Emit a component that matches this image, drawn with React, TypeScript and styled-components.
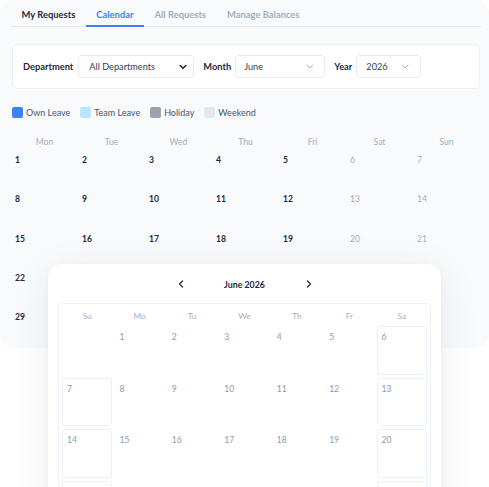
import React from "react";
import styled, { createGlobalStyle } from "styled-components";

const GlobalStyle = createGlobalStyle`
  html, body { margin: 0; padding: 0; background: #ffffff; }
  body { font-family: Lato, "Open Sans", Arial, sans-serif; -webkit-font-smoothing: antialiased; }
  * { box-sizing: border-box; }
`;

const Root = styled.div`
  position: relative;
  width: 489px;
  height: 487px;
  overflow: hidden;
  background: #ffffff;
`;

const Page = styled.div`
  background: #f8fafc;
  border-radius: 14px;
  height: 348px;
  padding: 0 8px 0 11px;
  display: flex;
  flex-direction: column;
`;

const TabBar = styled.div`
  display: flex;
  padding-top: 4px;
  border-bottom: 1px solid #e5e9f0;
`;

const Tab = styled.div<{ $active?: boolean; $muted?: boolean }>`
  height: 23px;
  padding: 0 10.5px;
  display: flex;
  align-items: center;
  font-size: 9.4px;
  font-weight: 700;
  color: ${(p) => (p.$active ? "#3b82f6" : p.$muted ? "#a0aec0" : "#1e293b")};
  border-bottom: 2px solid ${(p) => (p.$active ? "#3b82f6" : "transparent")};
  margin-bottom: -1px;
`;

const FilterCard = styled.div`
  margin-top: 17px;
  margin-right: 1px;
  margin-left: 1px;
  height: 45px;
  background: #ffffff;
  border: 1px solid #edf1f6;
  border-radius: 6px;
  display: flex;
  align-items: center;
  padding: 0 10px;
`;

const Label = styled.span<{ $gap: number }>`
  font-size: 9.3px;
  font-weight: 700;
  color: #1e293b;
  margin-right: ${(p) => p.$gap}px;
`;

const Select = styled.div<{ $w: number; $pl: number; $after: number }>`
  width: ${(p) => p.$w}px;
  height: 23px;
  border: 1px solid #e5e9f0;
  border-radius: 4px;
  background: #ffffff;
  display: flex;
  align-items: center;
  justify-content: space-between;
  padding: 0 ${(p) => p.$after}px 0 ${(p) => p.$pl}px;
  margin-right: 9px;
  font-size: 9.2px;
  color: #334155;
`;

const Legend = styled.div`
  margin-top: 18px;
  display: flex;
  align-items: center;
  gap: 10px;
  margin-left: 1px;
`;

const LegendItem = styled.div`
  display: flex;
  align-items: center;
  gap: 3px;
  font-size: 9px;
  color: #475569;
`;

const Swatch = styled.span<{ $c: string }>`
  width: 11px;
  height: 11px;
  border-radius: 2px;
  background: ${(p) => p.$c};
`;

const MonthGrid = styled.div`
  margin-top: 16px;
  display: grid;
  grid-template-columns: repeat(7, 1fr);
  grid-auto-rows: 39.3px;
  grid-template-rows: 16px;
  margin-right: 1px;
`;

const WeekHead = styled.div`
  text-align: center;
  font-size: 8.6px;
  color: #a3aec2;
  line-height: 16px;
`;

const DayCell = styled.div<{ $weekend?: boolean }>`
  padding: 4px 4px;
  font-size: 8.6px;
  font-weight: ${(p) => (p.$weekend ? 400 : 700)};
  color: ${(p) => (p.$weekend ? "#a3aec2" : "#1e293b")};
  line-height: 12px;
`;

const Popup = styled.div`
  position: absolute;
  left: 48px;
  top: 264px;
  width: 393px;
  height: 300px;
  background: #ffffff;
  border-radius: 14px;
  box-shadow: 0 8px 40px rgba(15, 23, 42, 0.08), 0 1px 4px rgba(15, 23, 42, 0.03);
  padding: 13px 10px 0;
`;

const PopupHeader = styled.div`
  display: flex;
  align-items: center;
  justify-content: center;
  height: 14px;
  margin-bottom: 12px;
`;

const NavBtn = styled.span`
  width: 14px;
  height: 14px;
  display: flex;
  align-items: center;
  justify-content: center;
  color: #1e293b;
`;

const PopupTitle = styled.span`
  width: 114px;
  text-align: center;
  font-size: 8.8px;
  font-weight: 700;
  color: #1e293b;
`;

const MiniBox = styled.div`
  border: 1px solid #eef1f6;
  border-radius: 4px;
  padding: 0 3px 4px;
  display: grid;
  grid-template-columns: repeat(7, 1fr);
  grid-template-rows: 19px;
  grid-auto-rows: 48.5px;
  column-gap: 2px;
  row-gap: 3px;
`;

const MiniHead = styled.div`
  text-align: center;
  font-size: 8.3px;
  color: #a3aec2;
  padding-top: 5px;
  line-height: 14px;
`;

const MiniCell = styled.div<{ $boxed?: boolean }>`
  padding: 4px 4px;
  font-size: 8.6px;
  line-height: 12px;
  color: #8c9ab0;
  border-radius: 3px;
  border: 1px solid ${(p) => (p.$boxed ? "#edf0f5" : "transparent")};
  background: #ffffff;
`;

const Chevron = ({ strong }: { strong?: boolean }) =>
  strong ? (
    <svg width="8" height="6" viewBox="0 0 8 6">
      <path d="M1.2 1.5 L4 4.3 L6.8 1.5" fill="none" stroke="#1e293b" strokeWidth="1.6" strokeLinecap="round" strokeLinejoin="round" />
    </svg>
  ) : (
    <svg width="8" height="5" viewBox="0 0 8 5">
      <path d="M1 1 L4 4 L7 1" fill="none" stroke="#a3aec2" strokeWidth="0.9" strokeLinecap="round" strokeLinejoin="round" />
    </svg>
  );

const Arrow = ({ dir }: { dir: "l" | "r" }) => (
  <svg width="6" height="8" viewBox="0 0 6 8">
    <path
      d={dir === "l" ? "M4.5 1 L1.5 4 L4.5 7" : "M1.5 1 L4.5 4 L1.5 7"}
      fill="none"
      stroke="#1e293b"
      strokeWidth="1.3"
      strokeLinecap="round"
      strokeLinejoin="round"
    />
  </svg>
);

const weekdays = ["Mon", "Tue", "Wed", "Thu", "Fri", "Sat", "Sun"];
const miniDays = ["Su", "Mo", "Tu", "We", "Th", "Fr", "Sa"];

export default function App() {
  const days = Array.from({ length: 30 }, (_, i) => i + 1);
  const mini: (number | null)[] = [null, ...days];
  return (
    <Root>
      <GlobalStyle />
      <Page>
        <TabBar>
          <Tab>My Requests</Tab>
          <Tab $active>Calendar</Tab>
          <Tab $muted>All Requests</Tab>
          <Tab $muted>Manage Balances</Tab>
        </TabBar>
        <FilterCard>
          <Label $gap={5}>Department</Label>
          <Select $w={116} $pl={10} $after={6}>
            <span>All Departments</span>
            <Chevron strong />
          </Select>
          <Label $gap={4}>Month</Label>
          <Select $w={90} $pl={8} $after={10}>
            <span>June</span>
            <Chevron />
          </Select>
          <Label $gap={4}>Year</Label>
          <Select $w={65} $pl={9} $after={11}>
            <span>2026</span>
            <Chevron />
          </Select>
        </FilterCard>
        <Legend>
          <LegendItem>
            <Swatch $c="#3b82f6" />
            Own Leave
          </LegendItem>
          <LegendItem>
            <Swatch $c="#bae6fd" />
            Team Leave
          </LegendItem>
          <LegendItem>
            <Swatch $c="#9ca3af" />
            Holiday
          </LegendItem>
          <LegendItem>
            <Swatch $c="#e2e8f0" />
            Weekend
          </LegendItem>
        </Legend>
        <MonthGrid>
          {weekdays.map((w) => (
            <WeekHead key={w}>{w}</WeekHead>
          ))}
          {days.map((d) => {
            const col = (d - 1) % 7;
            return (
              <DayCell key={d} $weekend={col >= 5}>
                {d}
              </DayCell>
            );
          })}
        </MonthGrid>
      </Page>
      <Popup>
        <PopupHeader>
          <NavBtn>
            <Arrow dir="l" />
          </NavBtn>
          <PopupTitle>June 2026</PopupTitle>
          <NavBtn>
            <Arrow dir="r" />
          </NavBtn>
        </PopupHeader>
        <MiniBox>
          {miniDays.map((d) => (
            <MiniHead key={d}>{d}</MiniHead>
          ))}
          {mini.map((d, i) => {
            const col = i % 7;
            const weekend = col === 0 || col === 6;
            return (
              <MiniCell key={i} $boxed={weekend && d !== null}>
                {d ?? ""}
              </MiniCell>
            );
          })}
        </MiniBox>
      </Popup>
    </Root>
  );
}
